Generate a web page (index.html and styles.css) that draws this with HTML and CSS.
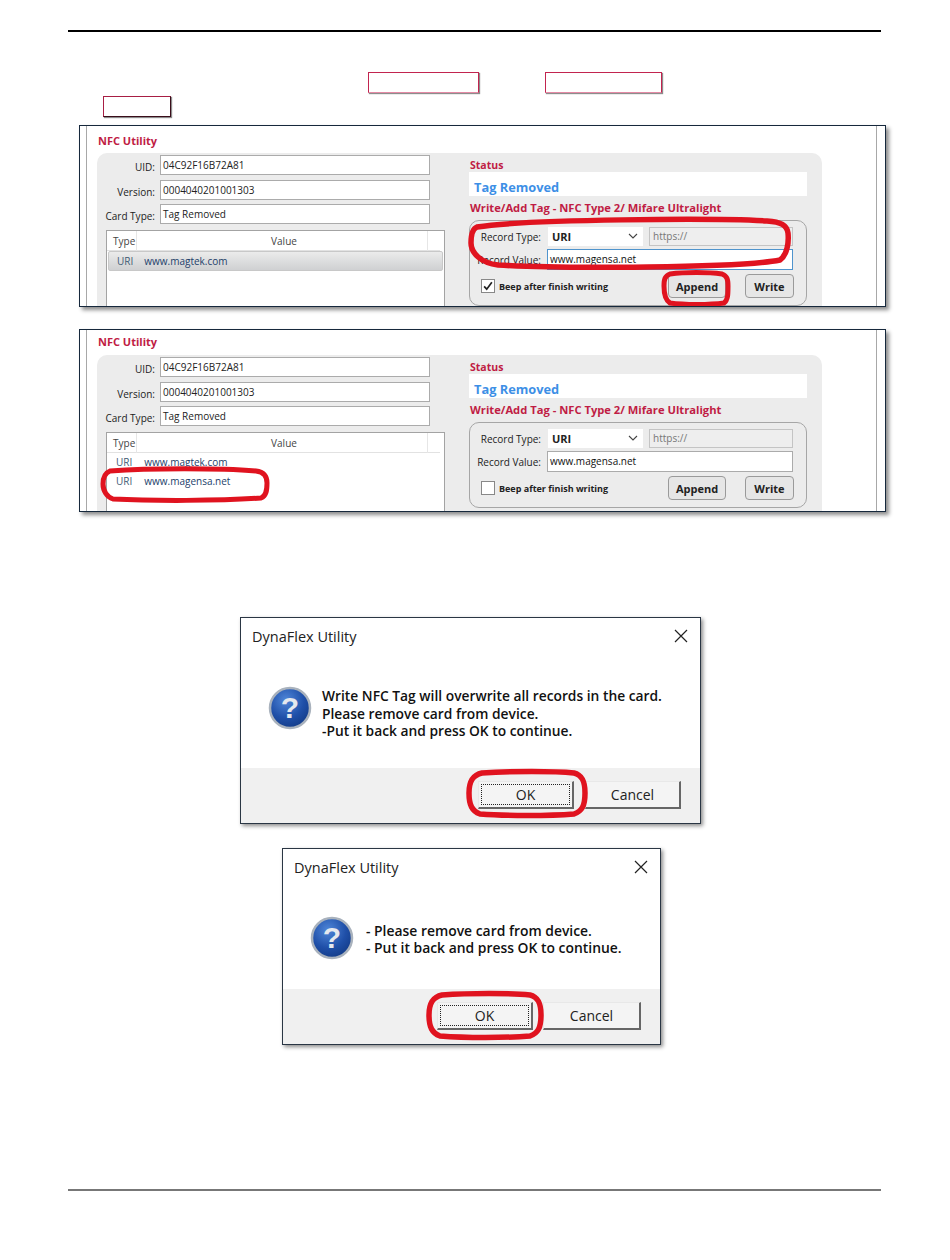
FILE: index.html
```html
<!DOCTYPE html>
<html>
<head>
    <title>NFC Utility - Write Tag</title>
    <link rel="stylesheet" href="styles.css">
</head>
<body>
    <div class="page">
        <div class="top-rule"></div>

        <div class="link-row link-row-first">
            <span class="link-box link-box-a"></span>
            <span class="link-box link-box-b"></span>
        </div>
        <div class="link-row link-row-second">
            <span class="link-box link-box-c"></span>
        </div>

        <!-- first capture: append highlighted -->
        <div class="shot shot-first">
            <div class="shot-inner">
                <div class="app-title">NFC Utility</div>
                <div class="panel">
                    <div class="left-col">
                        <div class="field"><label>UID:</label><div class="text-box">04C92F16B72A81</div></div>
                        <div class="field"><label>Version:</label><div class="text-box">0004040201001303</div></div>
                        <div class="field"><label>Card Type:</label><div class="text-box">Tag Removed</div></div>
                        <div class="list">
                            <div class="list-head"><span>Type</span><span class="head-value">Value</span><span></span></div>
                            <div class="list-row list-row-selected"><span>URI</span><span class="row-value">www.magtek.com</span></div>
                        </div>
                    </div>
                    <div class="right-col">
                        <div class="section-title">Status</div>
                        <div class="status-strip">Tag Removed</div>
                        <div class="section-title section-title-write">Write/Add Tag - NFC Type 2/ Mifare Ultralight</div>
                        <div class="write-box">
                            <div class="write-row">
                                <label>Record Type:</label>
                                <div class="select-box">URI<svg class="chevron" viewBox="0 0 10 6"><path d="M1 1l4 4 4-4" fill="none" stroke="#444" stroke-width="1.1"/></svg></div>
                                <div class="prefix-box">https://</div>
                            </div>
                            <div class="write-row write-row-value">
                                <label>Record Value:</label>
                                <div class="value-box value-box-active">www.magensa.net</div>
                            </div>
                            <div class="write-actions">
                                <span class="check-box"><svg viewBox="0 0 14 14"><path d="M2.5 7.5l3 3.2 6-8" fill="none" stroke="#222" stroke-width="2"/></svg></span>
                                <span class="check-label">Beep after finish writing</span>
                                <button class="app-btn btn-append">Append</button>
                                <button class="app-btn btn-write">Write</button>
                            </div>
                        </div>
                    </div>
                </div>
            </div>
            <svg class="mark mark-record" viewBox="0 0 326 54"><path d="M10 10C60 2 250 1 300 4c14 1 20 4 21 12 1 10-1 22-8 27-40 8-220 9-282 5C14 46 4 36 4 26 4 18 5 12 10 10z" fill="none" stroke="#e0131f" stroke-width="5.5"/></svg>
            <svg class="mark mark-append" viewBox="0 0 70 36"><path d="M9 3c15-2 38-2 52 0 5 2 6 5 6 12 0 8 0 14-4 17-14 2-40 2-54 0-5-3-6-9-6-17C3 8 4 5 9 3z" fill="none" stroke="#e0131f" stroke-width="5"/></svg>
        </div>

        <!-- second capture: new record in list -->
        <div class="shot shot-second">
            <div class="shot-inner">
                <div class="app-title">NFC Utility</div>
                <div class="panel">
                    <div class="left-col">
                        <div class="field"><label>UID:</label><div class="text-box">04C92F16B72A81</div></div>
                        <div class="field"><label>Version:</label><div class="text-box">0004040201001303</div></div>
                        <div class="field"><label>Card Type:</label><div class="text-box">Tag Removed</div></div>
                        <div class="list">
                            <div class="list-head"><span>Type</span><span class="head-value">Value</span><span></span></div>
                            <div class="list-row"><span>URI</span><span class="row-value">www.magtek.com</span></div>
                            <div class="list-row"><span>URI</span><span class="row-value">www.magensa.net</span></div>
                        </div>
                    </div>
                    <div class="right-col">
                        <div class="section-title">Status</div>
                        <div class="status-strip">Tag Removed</div>
                        <div class="section-title section-title-write">Write/Add Tag - NFC Type 2/ Mifare Ultralight</div>
                        <div class="write-box">
                            <div class="write-row">
                                <label>Record Type:</label>
                                <div class="select-box">URI<svg class="chevron" viewBox="0 0 10 6"><path d="M1 1l4 4 4-4" fill="none" stroke="#444" stroke-width="1.1"/></svg></div>
                                <div class="prefix-box">https://</div>
                            </div>
                            <div class="write-row write-row-value">
                                <label>Record Value:</label>
                                <div class="value-box">www.magensa.net</div>
                            </div>
                            <div class="write-actions">
                                <span class="check-box"></span>
                                <span class="check-label">Beep after finish writing</span>
                                <button class="app-btn btn-append">Append</button>
                                <button class="app-btn btn-write">Write</button>
                            </div>
                        </div>
                    </div>
                </div>
            </div>
            <svg class="mark mark-list" viewBox="0 0 170 36"><path d="M10 4c40-3 110-3 146 0 8 1 11 5 11 12 0 8-1 13-6 15-40 3-110 3-148 1C7 30 3 24 3 17 3 10 5 6 10 4z" fill="none" stroke="#e0131f" stroke-width="5"/></svg>
        </div>

        <div class="dialog dialog-first">
            <div class="dialog-head">
                <span>DynaFlex Utility</span>
                <svg class="dialog-close" viewBox="0 0 14 14"><path d="M1 1l12 12M13 1L1 13" fill="none" stroke="#222" stroke-width="1.2"/></svg>
            </div>
            <div class="dialog-body">
                <svg class="question" viewBox="0 0 44 44">
                    <defs>
                        <radialGradient id="qBlue" cx="40%" cy="30%" r="75%">
                            <stop offset="0" stop-color="#4f86d8"/>
                            <stop offset="0.6" stop-color="#1f4fa8"/>
                            <stop offset="1" stop-color="#123a86"/>
                        </radialGradient>
                    </defs>
                    <circle cx="22" cy="22" r="20" fill="url(#qBlue)" stroke="#a9b2bd" stroke-width="2.5"/>
                    <text x="22" y="32" text-anchor="middle" class="question-mark">?</text>
                </svg>
                <div class="dialog-text">
                    <p>Write NFC Tag will overwrite all records in the card.</p>
                    <p>Please remove card from device.</p>
                    <p>-Put it back and press OK to continue.</p>
                </div>
            </div>
            <div class="dialog-foot">
                <button class="win-btn win-btn-default"><span>OK</span></button>
                <button class="win-btn"><span>Cancel</span></button>
            </div>
            <svg class="mark mark-ok" viewBox="0 0 122 48"><path d="M16 3c30-2 72-2 92 0 8 2 11 8 11 20 0 13-3 18-11 21-25 2-68 2-94 0C6 41 3 35 3 23 3 11 7 5 16 3z" fill="none" stroke="#e0131f" stroke-width="5.5"/></svg>
        </div>

        <div class="dialog dialog-second">
            <div class="dialog-head">
                <span>DynaFlex Utility</span>
                <svg class="dialog-close" viewBox="0 0 14 14"><path d="M1 1l12 12M13 1L1 13" fill="none" stroke="#222" stroke-width="1.2"/></svg>
            </div>
            <div class="dialog-body">
                <svg class="question" viewBox="0 0 44 44">
                    <defs>
                        <radialGradient id="qBlue2" cx="40%" cy="30%" r="75%">
                            <stop offset="0" stop-color="#4f86d8"/>
                            <stop offset="0.6" stop-color="#1f4fa8"/>
                            <stop offset="1" stop-color="#123a86"/>
                        </radialGradient>
                    </defs>
                    <circle cx="22" cy="22" r="20" fill="url(#qBlue2)" stroke="#a9b2bd" stroke-width="2.5"/>
                    <text x="22" y="32" text-anchor="middle" class="question-mark">?</text>
                </svg>
                <div class="dialog-text">
                    <p>- Please remove card from device.</p>
                    <p>- Put it back and press OK to continue.</p>
                </div>
            </div>
            <div class="dialog-foot">
                <button class="win-btn win-btn-default"><span>OK</span></button>
                <button class="win-btn win-btn-wide"><span>Cancel</span></button>
            </div>
            <svg class="mark mark-ok" viewBox="0 0 118 48"><path d="M16 3c28-2 68-2 88 0 8 2 11 8 11 20 0 13-3 18-11 21-25 2-64 2-90 0C6 41 3 35 3 23 3 11 7 5 16 3z" fill="none" stroke="#e0131f" stroke-width="5.5"/></svg>
        </div>

        <div class="bottom-rule"></div>
    </div>
</body>
</html>
```
FILE: styles.css
```css
body {
    margin: 0;
    background-color: #fff;
    font-family: "Open Sans", "Liberation Sans", sans-serif;
}

.page {
    width: 813px;
    margin-left: 68px;
    padding-top: 30px;
}

.top-rule {
    height: 2px;
    background-color: #000;
}

.bottom-rule {
    height: 2px;
    margin-top: 144px;
    background-color: #777;
}

/* link boxes */
.link-row {
    display: flex;
    height: 21px;
}

.link-row-first {
    margin-top: 40px;
    padding-left: 300px;
}

.link-row-second {
    margin-top: 3px;
    padding-left: 35px;
}

.link-box {
    display: block;
    box-sizing: border-box;
    height: 21px;
    border: 1px solid #c2244f;
    border-bottom-color: #e58aa5;
    box-shadow: 1px 1px 1px #8d8d8d;
}

.link-box-a {
    width: 111px;
}

.link-box-b {
    width: 117px;
    margin-left: 66px;
}

.link-box-c {
    width: 68px;
    border-color: #a81e44;
    border-right-color: #3a0d1a;
    border-bottom-color: #3a0d1a;
}

/* app captures */
.shot {
    position: relative;
    box-sizing: border-box;
    width: 807px;
    margin-left: 11px;
    border: 1px solid #16283c;
    box-shadow: 3px 3px 4px rgba(0,0,0,0.45);
    background-color: #fff;
    overflow: hidden;
}

.shot-first {
    height: 182px;
    margin-top: 8px;
}

.shot-second {
    height: 183px;
    margin-top: 22px;
}

.shot-inner {
    box-sizing: border-box;
    height: 100%;
    margin: 0 8px 0 6px;
    padding-left: 10px;
    border-left: 1px solid #a8a8a8;
    border-right: 1px solid #a8a8a8;
}

.app-title {
    height: 27px;
    padding: 6px 0 0 1px;
    box-sizing: border-box;
    font-size: 11px;
    font-weight: 700;
    line-height: 18px;
    color: #c01c44;
}

.shot-second .app-title {
    height: 25px;
    padding-top: 3px;
}

.panel {
    display: flex;
    gap: 24px;
    width: 725px;
    height: 170px;
    box-sizing: border-box;
    padding: 2px 15px 0 7px;
    border-radius: 10px 10px 0 0;
    background-color: #ececec;
}

.left-col {
    width: 341px;
    flex: none;
}

.field {
    display: flex;
    align-items: flex-start;
    gap: 5px;
    margin-bottom: 4.5px;
}

.field label {
    width: 51px;
    margin-top: 5px;
    text-align: right;
    font-size: 10px;
    line-height: 15px;
    color: #222;
    white-space: nowrap;
}

.text-box {
    box-sizing: border-box;
    width: 270px;
    height: 20px;
    padding-left: 2px;
    border: 1px solid #ababab;
    background-color: #fff;
    font-size: 10px;
    line-height: 18px;
    color: #222;
}

.list {
    box-sizing: border-box;
    width: 339px;
    height: 90px;
    margin: 6px 0 0 2px;
    border: 1px solid #a3a3a3;
    background-color: #fff;
    font-size: 10px;
    color: #444;
}

.list-head {
    display: grid;
    grid-template-columns: 30px 291px 1fr;
    height: 19px;
    line-height: 20px;
    margin-right: 4px;
    border-bottom: 1px solid #e2e2e2;
}

.list-head span {
    border-right: 1px solid #e6e6e6;
    padding-left: 6px;
}

.list-head span:last-child {
    border-right: none;
}

.list-head .head-value {
    padding-left: 4px;
    text-align: center;
}

.list-row {
    display: flex;
    height: 19px;
    padding-left: 9px;
    line-height: 19px;
    color: #3f5c75;
}

.list-row-selected {
    box-sizing: border-box;
    height: 20px;
    margin: 0 1px;
    padding-left: 8px;
    border: 1px solid #c8c8c8;
    border-radius: 2px;
    background: linear-gradient(#ebebeb, #cfd0d2);
}

.row-value {
    margin-left: 12px;
    color: #23406a;
}

.list-row-selected .row-value {
    margin-left: 11px;
}

.right-col {
    width: 338px;
    flex: none;
    margin-top: 2px;
}

.section-title {
    height: 15px;
    padding-left: 1px;
    font-size: 10.5px;
    font-weight: 700;
    line-height: 17px;
    color: #c01c44;
}

.section-title-write {
    height: 24px;
    font-size: 11.2px;
    line-height: 24px;
    white-space: nowrap;
}

.status-strip {
    height: 24px;
    padding-left: 5px;
    background-color: #fff;
    font-size: 12.8px;
    font-weight: 700;
    line-height: 30px;
    color: #3d8fe6;
}

.write-box {
    box-sizing: border-box;
    height: 86px;
    padding: 6px 12px 0 0;
    border: 1px solid #a6a6a6;
    border-radius: 10px;
}

.write-row {
    display: flex;
    align-items: center;
    height: 19px;
    font-size: 10px;
    color: #222;
}

.write-row label {
    width: 71px;
    margin-right: 7px;
    text-align: right;
    white-space: nowrap;
}

.write-row-value {
    height: 21px;
    margin-top: 3px;
}

.write-row-value label {
    margin-right: 6px;
}

.select-box {
    position: relative;
    box-sizing: border-box;
    width: 95px;
    height: 19px;
    padding-left: 4px;
    background-color: #fff;
    font-size: 11px;
    font-weight: 700;
    line-height: 19px;
}

.chevron {
    position: absolute;
    right: 5px;
    top: 6px;
    width: 10px;
    height: 6px;
}

.prefix-box {
    box-sizing: border-box;
    width: 144px;
    height: 19px;
    margin-left: 6px;
    padding-left: 3px;
    border: 1px solid #c4c4c4;
    background-color: #eee;
    line-height: 17px;
    color: #777;
}

.value-box {
    box-sizing: border-box;
    width: 246px;
    height: 21px;
    padding-left: 2px;
    border: 1px solid #ababab;
    background-color: #fff;
    line-height: 18px;
    color: #111;
}

.value-box-active {
    border-color: #4f94cd;
}

.write-actions {
    display: flex;
    align-items: center;
    height: 24px;
    margin-top: 4px;
    padding-left: 11px;
}

.check-box {
    box-sizing: border-box;
    width: 14px;
    height: 14px;
    border: 1px solid #888;
    background-color: #fff;
}

.check-box svg {
    display: block;
    width: 12px;
    height: 12px;
}

.check-label {
    margin-left: 4px;
    font-size: 9px;
    font-weight: 700;
    color: #222;
    white-space: nowrap;
}

.app-btn {
    box-sizing: border-box;
    height: 24px;
    padding: 0;
    border: 1px solid #9a9a9a;
    border-radius: 4px;
    background-color: #e6e6e6;
    font-family: inherit;
    font-size: 11px;
    font-weight: 700;
    color: #222;
}

.btn-append {
    width: 58px;
    margin-left: auto;
}

.btn-write {
    width: 49px;
    margin-left: 19px;
}

/* red hand drawn marks lie over the captures */
.mark {
    position: absolute;
    overflow: visible;
}

.mark-record {
    left: 387px;
    top: 91px;
    width: 326px;
    height: 54px;
}

.mark-append {
    left: 581px;
    top: 145px;
    width: 70px;
    height: 36px;
}

.mark-list {
    left: 20px;
    top: 137px;
    width: 170px;
    height: 36px;
}

.mark-ok {
    left: 225px;
    top: 152px;
    width: 122px;
    height: 48px;
}

.dialog-second .mark-ok {
    left: 143px;
    top: 143px;
    width: 118px;
    height: 48px;
}

/* windows message boxes */
.dialog {
    position: relative;
    box-sizing: border-box;
    border: 1px solid #2a3644;
    box-shadow: 2px 2px 4px rgba(0,0,0,0.45);
    background-color: #fff;
    color: #111;
}

.dialog-first {
    width: 461px;
    height: 207px;
    margin: 105px 0 0 172px;
}

.dialog-second {
    width: 379px;
    height: 197px;
    margin: 24px 0 0 214px;
}

.dialog-head {
    display: flex;
    align-items: center;
    justify-content: space-between;
    height: 36px;
    padding: 0 12px 0 11px;
    font-size: 14.5px;
    color: #222;
}

.dialog-close {
    width: 14px;
    height: 14px;
}

.dialog-body {
    display: flex;
    align-items: flex-start;
    height: 114px;
    box-sizing: border-box;
    padding: 32px 0 0 27px;
}

.dialog-second .dialog-body {
    height: 104px;
    padding-top: 31px;
}

.question {
    width: 44px;
    height: 44px;
    flex: none;
}

.question-mark {
    font-family: "Liberation Sans", sans-serif;
    font-size: 30px;
    font-weight: 700;
    fill: #e4e8ee;
}

.dialog-text {
    margin: 1px 0 0 10px;
    font-size: 13.8px;
    font-weight: 600;
    line-height: 17.5px;
    color: #111;
}

.dialog-second .dialog-text {
    margin: 7px 0 0 12px;
    font-size: 13.9px;
    line-height: 16.5px;
}

.dialog-text p {
    margin: 0;
    white-space: nowrap;
}

.dialog-foot {
    display: flex;
    justify-content: flex-end;
    gap: 11px;
    box-sizing: border-box;
    height: 55px;
    padding: 13px 19px 0 0;
    background-color: #f0f0f0;
}

.dialog-second .dialog-foot {
    gap: 10px;
}

.win-btn {
    box-sizing: border-box;
    width: 96px;
    height: 28px;
    padding: 3px;
    border: 1px solid #e8e8e8;
    border-right: 2px solid #666;
    border-bottom: 2px solid #666;
    background-color: #f4f4f4;
    font-family: inherit;
    font-size: 14px;
    color: #222;
}

.win-btn-wide {
    width: 98px;
}

.win-btn span {
    display: block;
    height: 100%;
    line-height: 19px;
}

.win-btn-default span {
    outline: 1px dotted #222;
}
```
